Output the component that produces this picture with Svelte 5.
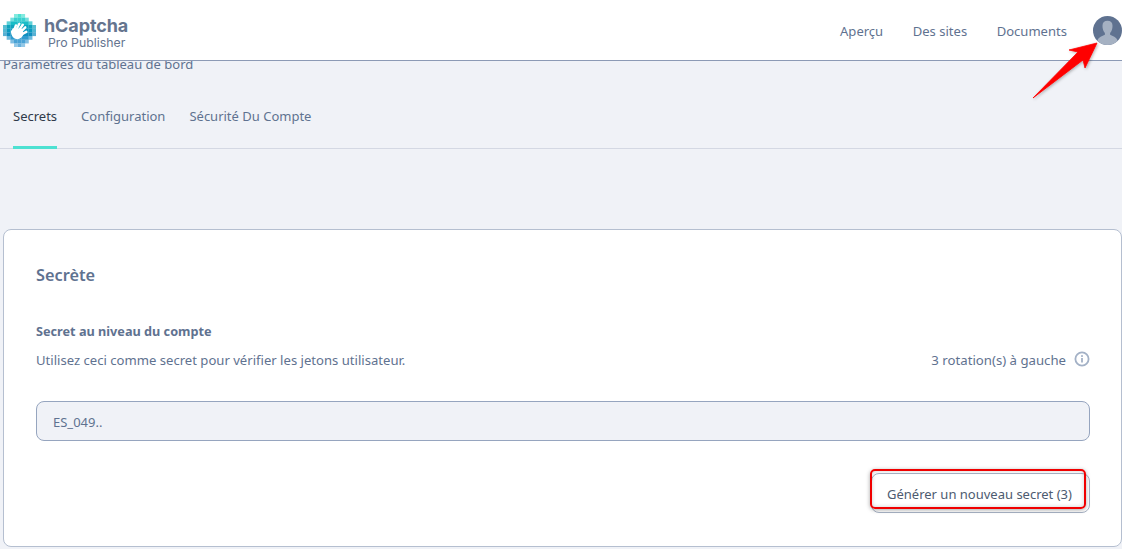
<script>
  const logoCells = [];
  const rows = [
    [3, 6, '#4de1d2'], [2, 7, '#39d0cf'], [1, 8, '#19bdc7'], [0, 9, '#0fa3bd'], [0, 9, '#0a9ac0'], [0, 9, '#0f8fc0'], [1, 8, '#2f9ccf'], [2, 7, '#4aa3d6'], [3, 6, '#66b0dd']
  ];
  rows.forEach(([a, b, c], y) => {
    for (let x = a; x < b; x++) {
      const edge = x === a || x === b - 1;
      logoCells.push({ x: x * 3.7, y: y * 3.7, c, o: edge ? 0.7 : 1 });
    }
  });
</script>

<div class="page">
  <header class="topbar">
    <div class="brand">
      <svg class="logo" viewBox="0 0 33.3 33.3" aria-hidden="true">
        {#each logoCells as cell}
          <rect x={cell.x} y={cell.y} width="3.8" height="3.8" fill={cell.c} opacity={cell.o} />
        {/each}
        <g stroke="#fff" stroke-width="2.4" stroke-linecap="round" fill="none">
          <path d="M11 17 L13 11.500" />
          <path d="M13.500 16 L16.500 9.800" />
          <path d="M16 16.500 L20 10.800" />
          <path d="M18 18 L22.500 13.500" />
          <path d="M19 20.500 L23.500 18" />
        </g>
        <path d="M8 17.500 L10 14.500 L19 15 L21 20 C19.500 24 16.500 25.800 13.500 25.300 C10.500 24.800 8 22 8 17.500 Z" fill="#fff" />
      </svg>
      <div class="brandtext">
        <span class="name">hCaptcha</span>
        <span class="plan">Pro Publisher</span>
      </div>
    </div>
    <nav class="nav">
      <span>Aperçu</span>
      <span>Des sites</span>
      <span>Documents</span>
      <svg class="avatar" viewBox="0 0 30 30" aria-hidden="true">
        <circle cx="15" cy="15" r="15" fill="#5f7290" />
        <path d="M4.500 25.500 C6 21.800 9.500 21 12.300 19.500 L12.300 17.500 C10.500 15.500 9.800 13 9.800 10 C9.800 7 11.800 5 15 5 C18.200 5 20.200 7 20.200 10 C20.200 13 19.500 15.500 17.700 17.500 L17.700 19.500 C20.500 21 24 21.800 25.500 25.500 C22.800 28.500 19 30 15 30 C11 30 7.200 28.500 4.500 25.500 Z" fill="#a5b1c2" />
      </svg>
    </nav>
  </header>

  <main class="content">
    <p class="crumb">Paramètres du tableau de bord</p>
    <div class="tabs">
      <span class="tab active">Secrets</span>
      <span class="tab">Configuration</span>
      <span class="tab">Sécurité Du Compte</span>
    </div>

    <section class="card">
      <h2>Secrète</h2>
      <h3>Secret au niveau du compte</h3>
      <div class="descrow">
        <span>Utilisez ceci comme secret pour vérifier les jetons utilisateur.</span>
        <span class="rot">3 rotation(s) à gauche
          <svg class="info" viewBox="0 0 16 16" aria-hidden="true">
            <circle cx="8" cy="8" r="6.600" fill="none" stroke="#a3b1c6" stroke-width="1.800" />
            <rect x="7.100" y="7" width="1.800" height="4.500" fill="#a3b1c6" />
            <rect x="7.100" y="4.200" width="1.800" height="1.700" fill="#a3b1c6" />
          </svg>
        </span>
      </div>
      <div class="field"><span class="fieldtext">ES_049..</span></div>
      <div class="actions">
        <button class="btn">Générer un nouveau secret (3)</button>
      </div>
    </section>
  </main>

  <svg class="arrow" viewBox="0 0 90 70" aria-hidden="true">
    <defs>
      <filter id="sh" x="-20%" y="-20%" width="140%" height="140%">
        <feDropShadow dx="1" dy="1" stdDeviation="1.500" flood-color="#000" flood-opacity="0.3" />
      </filter>
    </defs>
    <path d="M3 60 L48 14 L39 12 L67 5 L55 30 L53 22 Z" fill="#fe0000" stroke="#fe0000" stroke-width="0.800" stroke-linejoin="round" filter="url(#sh)" />
  </svg>
  <div class="highlight"></div>
</div>

<style>
  :global(body) {
    margin: 0;
    background: #f0f2f7;
    font-family: "Noto Sans", "Open Sans", sans-serif;
    overflow: hidden;
  }
  .page {
    position: relative;
    width: 1122px;
    height: 549px;
    overflow: hidden;
    background: #f0f2f7;
    color: #5f7290;
  }
  .topbar {
    position: relative;
    z-index: 1;
    height: 61px;
    box-sizing: border-box;
    background: #fff;
    border-bottom: 1px solid #8c9ab5;
    display: flex;
    justify-content: space-between;
    align-items: flex-start;
    padding: 0 0 0 3px;
  }
  .brand { display: flex; align-items: flex-start; gap: 8px; margin-top: 14px; }
  .logo { width: 33px; height: 33px; }
  .brandtext { display: flex; flex-direction: column; margin-top: 3px; }
  .name { font-family: "Inter", sans-serif; font-size: 18px; font-weight: 700; line-height: 18px; color: #65758f; letter-spacing: -0.1px; }
  .plan { font-family: "Inter", sans-serif; font-size: 12.300px; line-height: 14px; color: #65758f; margin: 1px 0 0 4px; }
  .nav { display: flex; align-items: center; gap: 29.500px; font-size: 13.050px; height: 62px; }
  .avatar { width: 29px; height: 29px; margin: -2px 0 0 -3.500px; }
  .content { padding: 0 0 0 3px; }
  .crumb { margin: -5px 0 0; font-size: 13px; line-height: 16px; height: 12px; }
  .tabs {
    display: flex;
    gap: 24px;
    height: 81px;
    margin: 0 0 0 -3px;
    padding: 0 0 0 13px;
    box-sizing: border-box;
    border-bottom: 1px solid #d4d8e3;
    font-size: 13px;
  }
  .tab { padding-top: 39px; height: 81px; box-sizing: border-box; }
  .tab.active { color: #2f3a4a; border-bottom: 3px solid #4de1d2; }
  .card {
    margin-top: 80px;
    width: 1119px;
    height: 318px;
    box-sizing: border-box;
    background: #fff;
    border: 1px solid #b5bfd0;
    border-radius: 8px;
    padding: 33px 31px 0 32px;
  }
  h2 { margin: 0; font-size: 16.300px; font-weight: 600; line-height: 24px; color: #5f7290; }
  h3 { margin: 35px 0 0; font-size: 12.700px; font-weight: 700; line-height: 18px; color: #5f7290; }
  .descrow { display: flex; justify-content: space-between; margin-top: 11px; font-size: 13.100px; line-height: 18px; }
  .rot { display: flex; align-items: center; gap: 8px; font-size: 13.200px; }
  .info { width: 16px; height: 16px; margin-top: -2px; }
  .field {
    margin-top: 32px;
    height: 40px;
    box-sizing: border-box;
    background: #f0f2f7;
    border: 1px solid #96a5bf;
    border-radius: 8px;
    padding-left: 16px;
    display: flex;
    align-items: center;
    font-size: 13px;
  }
  .fieldtext { padding-top: 2px; }
  .actions { display: flex; justify-content: flex-end; margin-top: 32px; }
  .btn {
    width: 219px;
    height: 40px;
    box-sizing: border-box;
    background: #fff;
    border: 1px solid #a8b3c5;
    border-radius: 8px;
    font: inherit;
    font-size: 13px;
    color: #4d5b70;
    padding: 2px 0 0 15px;
    text-align: left;
  }
  .arrow { position: absolute; z-index: 2; left: 1030px; top: 38px; width: 90px; height: 70px; }
  .highlight {
    position: absolute;
    left: 870px;
    top: 469px;
    width: 216px;
    height: 40px;
    box-sizing: border-box;
    border: 2px solid #f00000;
    border-radius: 5px;
    box-shadow: 0 1px 4px rgba(0,0,0,0.35), inset 0 0 4px rgba(0,0,0,0.2);
  }
</style>
